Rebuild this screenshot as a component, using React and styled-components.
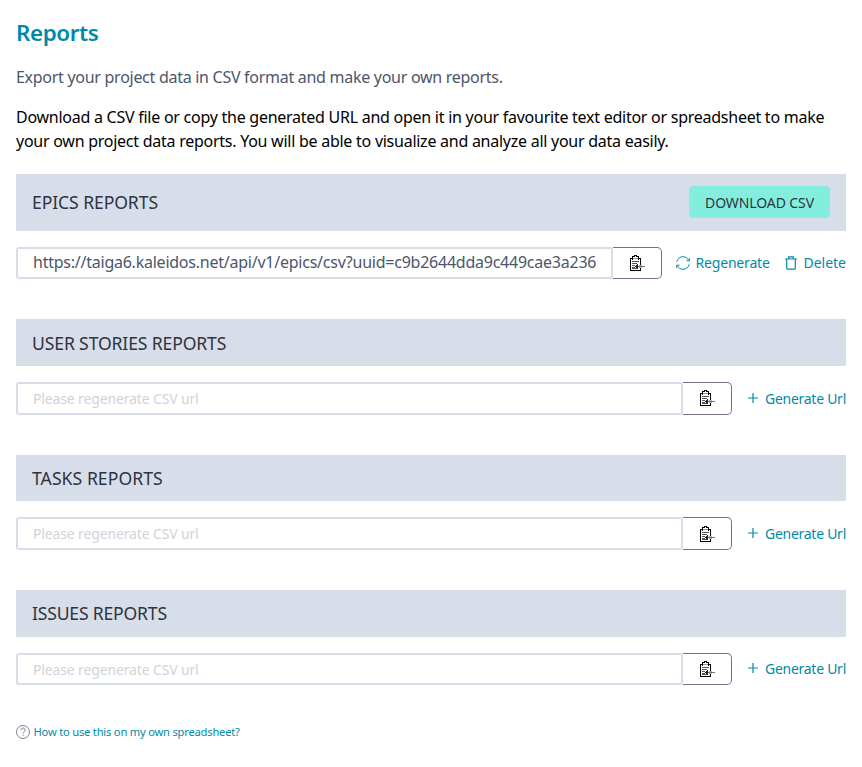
import React from "react";
import styled, { createGlobalStyle } from "styled-components";

const Global = createGlobalStyle`
  * { box-sizing: border-box; }
  body { margin: 0; background: #fff; font-family: "Noto Sans", "Open Sans", sans-serif; font-size: 16px; color: #4c566a; }
  h1, h2, p { margin: 0; font-weight: 400; }
`;
const Page = styled.main`
  padding: 16px;
  width: 862px;
  height: 767px;
  overflow: hidden;
`;
const Title = styled.h1`
  && { font-size: 22.4px; font-weight: 600; }
  line-height: 34px;
  letter-spacing: -0.4px;
  color: #008aa8;
`;
const Lead = styled.p`
  && { margin-top: 15px; }
  line-height: 24px;
  letter-spacing: -0.28px;
  white-space: nowrap;
`;
const Intro = styled.p`
  && { margin-top: 16px; }
  line-height: 24px;
  letter-spacing: -0.257px;
  color: #000;
  white-space: nowrap;
`;
const Section = styled.section`
  margin-top: ${p => (p.$first ? 21 : 40)}px;
`;
const Header = styled.header`
  display: flex;
  align-items: center;
  justify-content: space-between;
  background: #d8dee9;
  height: ${p => (p.$tall ? 57 : 46.67)}px;
  padding: 0 16px ${p => (p.$tall ? 2 : 0)}px;
`;
const Name = styled.h2`
  && { font-size: 17.6px; }
  line-height: 24px;
  letter-spacing: ${p => p.$track}px;
  color: #2e3440;
`;
const Download = styled.button`
  border: 0;
  border-radius: 4px;
  background: #83eede;
  width: 141px;
  height: 32px;
  padding: 2px 0 0;
  font: 14px "Noto Sans", sans-serif;
  letter-spacing: -0.1px;
  color: #2e3440;
`;
const Row = styled.div`
  display: flex;
  align-items: center;
  margin-top: 16px;
  height: ${p => (p.$tall ? 32.4 : 32.67)}px;
`;
const Field = styled.input`
  flex: 1;
  min-width: 0;
  height: 100%;
  border: 2px solid #d8dee9;
  border-radius: 3px;
  padding: 0 15px ${p => (p.readOnly ? 2 : 1)}px;
  font: 16px "Noto Sans", sans-serif;
  letter-spacing: -0.24px;
  color: #4c566a;
  outline: 0;
  &::placeholder { font-size: 14px; letter-spacing: -0.14px; color: #d0d3d9; opacity: 1; }
`;
const Copy = styled.button`
  width: 49px;
  height: 100%;
  border: 1px solid #70728f;
  border-left: 0;
  border-radius: 0 5px 5px 0;
  background: #fff;
  padding: 0;
  display: grid;
  place-items: center;
`;
const Actions = styled.div`
  display: flex;
  justify-content: space-between;
  flex: none;
  width: ${p => p.$width}px;
  padding-left: ${p => p.$inset}px;
  padding-top: ${p => p.$drop || 0}px;
`;
const Action = styled.a`
  display: flex;
  align-items: center;
  gap: ${p => p.$gap}px;
  font-size: 14px;
  line-height: 20px;
  letter-spacing: ${p => p.$track}px;
  color: #008aa8;
  white-space: nowrap;
`;
const Help = styled.a`
  display: flex;
  align-items: center;
  gap: 3.5px;
  font-size: 11.2px;
  line-height: 16px;
  letter-spacing: -0.22px;
  color: #008aa8;
  margin-top: 39px;
`;

const ClipboardIcon = () => (
  <svg width="16" height="16" viewBox="0 0 16 16" fill="none" shapeRendering="crispEdges">
    <path d="M1.5 3v12.5h10V13M11.5 10V3.5h-2M1 3.5h2" stroke="#000" />
    <path d="M3.5 4.5v-3h2v-1h2v1h2v3" stroke="#000" />
    <path d="M4 3.5h5" stroke="#999" />
    <path d="M3 6.5h7M3 8.5h5M3 10.5h3M3 12.5h3M3 13.5h6" stroke="#555" />
    <path d="M6 11h1v-1h1V9h1v5H8v-1H7v-1H6z" fill="#222" />
    <path d="M9 11h7v1H9z" fill="#777" />
    <path d="M10 10h3v1h-3zM10 12h3v1h-3z" fill="#aaa" />
  </svg>
);
const RefreshIcon = () => (
  <svg width="14" height="14" viewBox="0 0 14 14" fill="none" stroke="#008aa8">
    <path d="M.8 5.7C1.4 2.7 3.9.7 7 .7c2.6 0 4.8 1.5 5.8 3.9M13.2 8.3c-.6 3-3.1 5-6.2 5-2.6 0-4.8-1.5-5.8-3.9" />
    <path d="M13.4 1.8v3h-3M.6 12.2v-3h3" strokeWidth=".9" />
  </svg>
);
const TrashIcon = () => (
  <svg width="12" height="14" viewBox="0 0 12 14" fill="none" stroke="#008aa8" strokeWidth="1.2">
    <path d="M0 3h12M3.7 3V.8h4.6V3M1.7 3v9.2q0 1 1 1h6.6q1 0 1-1V3" />
  </svg>
);
const PlusIcon = () => (
  <svg width="10" height="12" viewBox="0 0 10 12" fill="none" stroke="#008aa8" strokeWidth="1.2">
    <path d="M0 5h10M5 0v10" />
  </svg>
);
const HelpIcon = () => (
  <svg width="14" height="14" viewBox="0 0 14 14" fill="none" stroke="#70728f" strokeWidth=".9">
    <circle cx="7" cy="7" r="6.5" />
    <path d="M4.8 5.3c0-1.4.9-2.2 2.2-2.2s2.2.8 2.2 2c0 1.6-2.1 1.7-2.1 3.5M7.1 9.8v1.2" />
  </svg>
);

const reports = [
  { name: "USER STORIES REPORTS", track: -0.14 },
  { name: "TASKS REPORTS", track: 0.05 },
  { name: "ISSUES REPORTS", track: -0.2 },
];

export default function App() {
  return (
    <>
      <Global />
      <Page>
        <Title>Reports</Title>
        <Lead>Export your project data in CSV format and make your own reports.</Lead>
        <Intro>
          Download a CSV file or copy the generated URL and open it in your favourite text editor or spreadsheet to make
          <br />
          your own project data reports. You will be able to visualize and analyze all your data easily.
        </Intro>
        <Section $first>
          <Header $tall>
            <Name $track={-0.1}>EPICS REPORTS</Name>
            <Download>DOWNLOAD CSV</Download>
          </Header>
          <Row $tall>
            <Field readOnly value="https://taiga6.kaleidos.net/api/v1/epics/csv?uuid=c9b2644dda9c449cae3a236f" />
            <Copy aria-label="Copy"><ClipboardIcon /></Copy>
            <Actions $width={184} $inset={14}>
              <Action $gap={5.5} $track={-0.18}><RefreshIcon />Regenerate</Action>
              <Action $gap={6} $track={0}><TrashIcon />Delete</Action>
            </Actions>
          </Row>
        </Section>
        {reports.map(r => (
          <Section key={r.name}>
            <Header><Name $track={r.track}>{r.name}</Name></Header>
            <Row>
              <Field placeholder="Please regenerate CSV url" />
              <Copy aria-label="Copy"><ClipboardIcon /></Copy>
              <Actions $width={114} $inset={16} $drop={0.8}>
                <Action $gap={7} $track={-0.27}><PlusIcon />Generate Url</Action>
              </Actions>
            </Row>
          </Section>
        ))}
        <Help><HelpIcon />How to use this on my own spreadsheet?</Help>
      </Page>
    </>
  );
}
